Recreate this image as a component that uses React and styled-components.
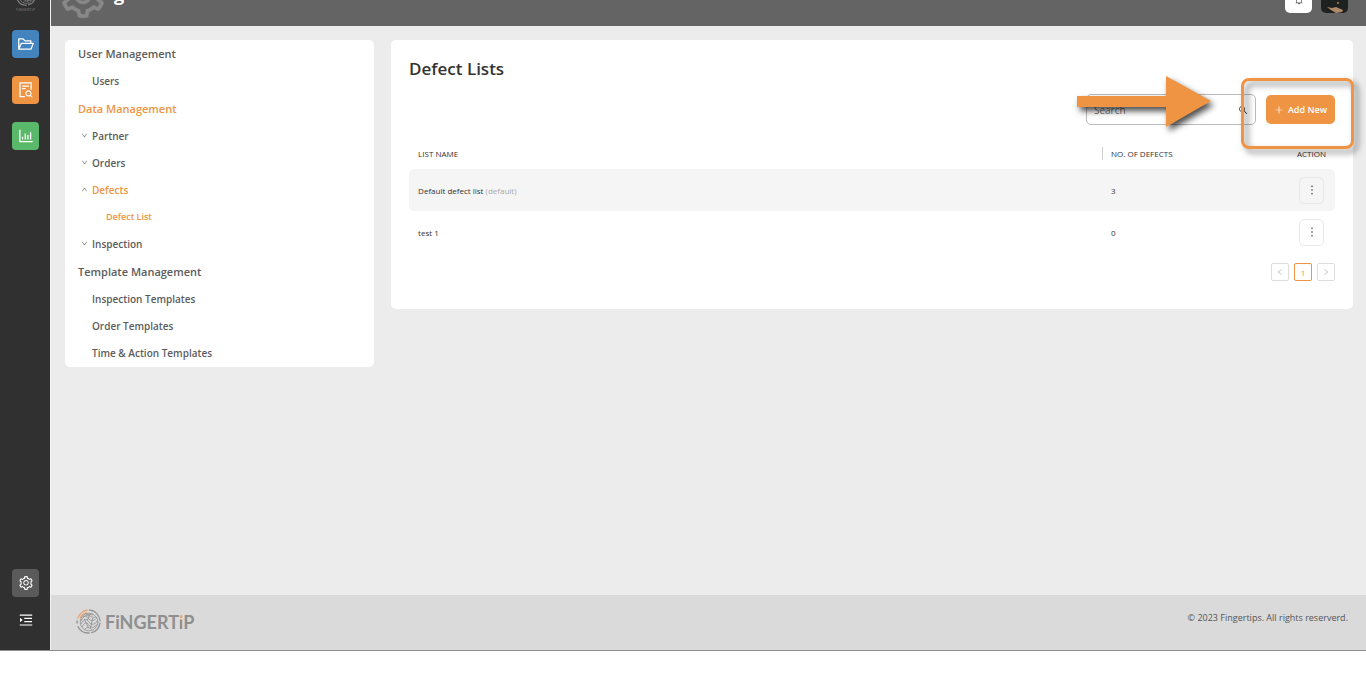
import React from 'react';
import styled, { createGlobalStyle } from 'styled-components';
import {
  AiOutlineFolderOpen,
  AiOutlineFileSearch,
  AiOutlineBarChart,
  AiOutlineSetting,
  AiOutlineMenuUnfold,
  AiOutlineBell,
  AiOutlinePlus,
  AiOutlineSearch,
  AiOutlineMore,
  AiOutlineDown,
  AiOutlineUp,
  AiOutlineLeft,
  AiOutlineRight,
} from 'react-icons/ai';

const menu = [
  { label: 'User Management', level: 0 },
  { label: 'Users', level: 1 },
  { label: 'Data Management', level: 0, active: true },
  { label: 'Partner', level: 1, arrow: 'down' },
  { label: 'Orders', level: 1, arrow: 'down' },
  { label: 'Defects', level: 1, arrow: 'up', active: true },
  { label: 'Defect List', level: 2, active: true },
  { label: 'Inspection', level: 1, arrow: 'down' },
  { label: 'Template Management', level: 0 },
  { label: 'Inspection Templates', level: 1 },
  { label: 'Order Templates', level: 1 },
  { label: 'Time & Action Templates', level: 1 },
];

const lists = [
  { name: 'Default defect list', note: '(default)', count: 3 },
  { name: 'test 1', count: 0 },
];

const FingerMark = ({ size, color, accent }) => (
  <svg width={size} height={size} viewBox='0 0 24 24' fill='none' stroke={color} strokeLinecap='round'>
    <path d='M13 1a11 11 0 0 1 10 10M23 13.5A11 11 0 0 1 15 22.6M12.5 23A11 11 0 0 1 2 17M1 13.5v-2' strokeWidth='1.3' />
    <path d='M1.6 9A11 11 0 0 1 5 4M6 3.2A11 11 0 0 1 10.5 1.2M4.3 8A9 9 0 0 1 10 3.8' stroke={accent} strokeWidth='1.3' />
    <circle cx='12.5' cy='12.5' r='8.5' strokeWidth='0.8' />
    <path d='M5 11c2-5 5-5 7-2s6 3 8-1M5 14c3-5 5-5 7-2s6 4 8 0M6 17c2-4 4-5 6-2s5 4 8 0M9 19.5c1-3 3-2 6 0M7 8c3-3 5-2 7-1s4 2 5 0M10 5.5c2-1 4 0 6 0M8 10l4 8M13 6l-2 5M16 9l-2 9' strokeWidth='0.9' />
  </svg>
);

const App = () => {
  return (
    <>
      <GlobalStyle />
      <Page>
        <Rail>
          <RailLogo>
            <FingerMark size={20} color='#858585' accent='#858585' />
            <span>FiNGERTiP</span>
          </RailLogo>
          <RailButton $color='#4384bf' aria-label='Files'><AiOutlineFolderOpen /></RailButton>
          <RailButton $color='#ee9443' aria-label='Inspections'><AiOutlineFileSearch /></RailButton>
          <RailButton $color='#5ab86a' aria-label='Reports'><AiOutlineBarChart /></RailButton>
          <RailFooter>
            <RailButton $color='#5a5a5a' aria-label='Settings'><AiOutlineSetting /></RailButton>
            <RailButton $color='transparent' aria-label='Expand menu'><AiOutlineMenuUnfold /></RailButton>
          </RailFooter>
        </Rail>
        <Main>
          <Header>
            <HeaderGear><AiOutlineSetting /></HeaderGear>
            <HeaderTitle>g</HeaderTitle>
            <HeaderTools>
              <BellButton aria-label='Notifications'><AiOutlineBell /></BellButton>
              <Avatar viewBox='0 0 27 27' aria-label='Profile'>
                <rect width='27' height='27' rx='5' fill='#1d211f' />
                <path d='M6 21l5 1 4-1 7 3-1 2-6 1-5-3z' fill='#b08a68' />
                <circle cx='17' cy='17' r='1' fill='#b5863c' />
              </Avatar>
            </HeaderTools>
          </Header>
          <Content>
            <SideMenu>
              {menu.map((item) => (
                <MenuItem key={item.label} href='#' $level={item.level} $active={item.active}>
                  {item.arrow && <Arrow>{item.arrow === 'up' ? <AiOutlineUp /> : <AiOutlineDown />}</Arrow>}
                  {item.label}
                </MenuItem>
              ))}
            </SideMenu>
            <Panel>
              <Title>Defect Lists</Title>
              <Toolbar>
                <SearchBox>
                  <input type='text' placeholder='Search' aria-label='Search' />
                  <AiOutlineSearch />
                </SearchBox>
                <AddButton><AiOutlinePlus />Add New</AddButton>
                <Highlight />
                <Pointer viewBox='0 0 150 64' aria-hidden='true'>
                  <path d='M1 20h89V0l45 25-45 26V31H1z' fill='#ee9443' />
                </Pointer>
              </Toolbar>
              <Table>
                <thead>
                  <tr>
                    <th>LIST NAME</th>
                    <CountHead>NO. OF DEFECTS</CountHead>
                    <ActionHead>ACTION</ActionHead>
                  </tr>
                </thead>
                <tbody>
                  {lists.map((list) => (
                    <tr key={list.name}>
                      <td>{list.name} {list.note && <Note>{list.note}</Note>}</td>
                      <td>{list.count}</td>
                      <td><MoreButton aria-label='Actions'><AiOutlineMore /></MoreButton></td>
                    </tr>
                  ))}
                </tbody>
              </Table>
              <Pagination>
                <PageButton aria-label='Previous'><AiOutlineLeft /></PageButton>
                <PageButton $active>1</PageButton>
                <PageButton aria-label='Next'><AiOutlineRight /></PageButton>
              </Pagination>
            </Panel>
          </Content>
          <Footer>
            <FooterLogo>
              <FingerMark size={25} color='#949494' accent='#e3a576' />
              <span>FiNGERT<AccentLetter>i</AccentLetter>P</span>
            </FooterLogo>
            <Copyright>© 2023 Fingertips. All rights reserverd.</Copyright>
          </Footer>
        </Main>
      </Page>
    </>
  )
};

const GlobalStyle = createGlobalStyle`
  * {
    box-sizing: border-box;
  }
  body {
    margin: 0;
    background: #fff;
    font-family: 'Open Sans', 'Noto Sans', sans-serif;
    color: #333;
  }
  button, input {
    font-family: inherit;
  }
`;

const Page = styled.div`
  display: flex;
  min-height: calc(100vh - 29px);
  border-bottom: 1px solid #8c8c8c;
  background: #ececec;
`;

const Rail = styled.nav`
  width: 51px;
  flex-shrink: 0;
  display: flex;
  flex-direction: column;
  align-items: center;
  gap: 18px;
  padding-bottom: 16px;
  background: #303030;
  box-shadow: inset -1px 0 #f4f4f4;
`;

const RailLogo = styled.div`
  height: 12px;
  display: flex;
  flex-direction: column;
  align-items: center;
  justify-content: flex-end;
  overflow: hidden;
  color: #777;
  font-size: 4px;
  line-height: 4px;
  svg {
    flex-shrink: 0;
    margin-bottom: 2px;
  }
`;

const RailButton = styled.button`
  width: 27px;
  height: 28px;
  display: flex;
  align-items: center;
  justify-content: center;
  padding: 0;
  border: 0;
  border-radius: 4px;
  background: ${(props) => props.$color};
  color: #fff;
  font-size: 18px;
`;

const RailFooter = styled.div`
  margin-top: auto;
  display: flex;
  flex-direction: column;
  gap: 9px;
  svg {
    font-size: 16px;
  }
`;

const Main = styled.div`
  flex: 1;
  min-width: 0;
  display: flex;
  flex-direction: column;
`;

const Header = styled.header`
  height: 26px;
  display: flex;
  align-items: flex-end;
  padding: 0 18px 0 7px;
  overflow: hidden;
  background: #646464;
  color: #fff;
`;

const HeaderGear = styled.span`
  display: flex;
  padding-bottom: 5px;
  color: #888;
  font-size: 50px;
  svg {
    stroke-width: 8;
  }
`;

const HeaderTitle = styled.h1`
  margin: 0 0 0 6px;
  padding-bottom: 20px;
  font-size: 18px;
  line-height: 24px;
  font-weight: 700;
`;

const HeaderTools = styled.div`
  margin-left: auto;
  display: flex;
  gap: 9px;
  padding-bottom: 13px;
`;

const BellButton = styled.button`
  width: 27px;
  height: 27px;
  display: flex;
  align-items: center;
  justify-content: center;
  padding: 0;
  border: 0;
  border-radius: 5px;
  background: #fff;
  color: #555;
  font-size: 10px;
`;

const Avatar = styled.svg`
  width: 27px;
  height: 27px;
`;

const Content = styled.div`
  flex: 1;
  display: flex;
  align-items: flex-start;
  gap: 17px;
  padding: 14px 13px 24px 14px;
`;

const SideMenu = styled.nav`
  width: 24%;
  flex-shrink: 0;
  padding-bottom: 1px;
  border-radius: 5px;
  background: #fff;
`;

const MenuItem = styled.a`
  display: flex;
  align-items: center;
  height: 27px;
  margin-top: ${(props) => (props.$level === 0 ? 1 : 0)}px;
  padding-left: ${(props) => 13 + props.$level * 14}px;
  color: ${(props) => (props.$active ? '#ee9443' : '#5c5c5c')};
  font-size: ${(props) => [11, 10, 9][props.$level]}px;
  font-weight: 600;
  text-decoration: none;
  &:first-child {
    margin-top: 0;
  }
`;

const Arrow = styled.span`
  width: 11px;
  margin-left: -11px;
  display: flex;
  color: #666;
  font-size: 7px;
`;

const Panel = styled.section`
  flex: 1;
  min-width: 0;
  padding: 17px 18px 28px;
  border-radius: 5px;
  background: #fff;
`;

const Title = styled.h2`
  margin: 0;
  font-size: 17px;
  line-height: 24px;
  font-weight: 600;
`;

const Toolbar = styled.div`
  position: relative;
  display: flex;
  align-items: center;
  justify-content: flex-end;
  gap: 10px;
  margin-top: 13px;
`;

const SearchBox = styled.label`
  width: 170px;
  height: 31px;
  display: flex;
  align-items: center;
  padding: 0 7px;
  border: 1px solid #bbb;
  border-radius: 5px;
  font-size: 10px;
  input {
    flex: 1;
    min-width: 0;
    padding: 0;
    border: 0;
    outline: 0;
    font-size: 10px;
  }
`;

const AddButton = styled.button`
  height: 29px;
  display: flex;
  align-items: center;
  gap: 4px;
  padding: 0 8px;
  border: 0;
  border-radius: 5px;
  background: #ee9443;
  color: #fff;
  font-size: 9px;
  font-weight: 600;
  svg {
    font-size: 10px;
  }
`;

const Highlight = styled.div`
  position: absolute;
  top: -16px;
  right: -19px;
  width: 113px;
  height: 71px;
  border: 3px solid #ee9443;
  border-radius: 8px;
  filter: drop-shadow(4px 4px 3px rgba(0, 0, 0, 0.5));
  pointer-events: none;
`;

const Pointer = styled.svg`
  position: absolute;
  top: -18px;
  right: 109px;
  width: 150px;
  height: 64px;
  filter: drop-shadow(3px 4px 3px rgba(0, 0, 0, 0.7));
  pointer-events: none;
`;

const Table = styled.table`
  width: 100%;
  margin-top: 12px;
  border-spacing: 0;
  table-layout: fixed;
  font-size: 8px;
  th {
    height: 32px;
    padding: 0 9px;
    font-weight: 400;
    text-align: left;
  }
  td {
    height: 42px;
    padding: 0 9px;
  }
  td:last-child {
    padding: 0 11px;
  }
  tbody tr:nth-child(odd) td {
    background: #f5f5f5;
  }
  td:first-child {
    border-radius: 5px 0 0 5px;
  }
  td:last-child {
    border-radius: 0 5px 5px 0;
  }
`;

const CountHead = styled.th`
  width: 168px;
  background: linear-gradient(#ccc, #ccc) left center / 1px 13px no-repeat;
`;

const ActionHead = styled.th`
  width: 65px;
  && {
    text-align: right;
  }
`;

const Note = styled.span`
  color: #aaa;
`;

const MoreButton = styled.button`
  width: 25px;
  height: 27px;
  display: flex;
  align-items: center;
  justify-content: center;
  margin-left: auto;
  padding: 0;
  border: 1px solid #e8e8e8;
  border-radius: 5px;
  background: transparent;
  color: #333;
  font-size: 14px;
`;

const Pagination = styled.div`
  display: flex;
  justify-content: flex-end;
  gap: 5px;
  margin-top: 10px;
`;

const PageButton = styled.button`
  width: 18px;
  height: 18px;
  display: flex;
  align-items: center;
  justify-content: center;
  padding: 0;
  border: 1px solid ${(props) => (props.$active ? '#ee9443' : '#ddd')};
  border-radius: 2px;
  background: #fff;
  color: ${(props) => (props.$active ? '#ee9443' : '#bbb')};
  font-size: 8px;
`;

const Footer = styled.footer`
  height: 55px;
  display: flex;
  align-items: center;
  justify-content: space-between;
  padding: 0 18px 2px 25px;
  background: #dadada;
`;

const FooterLogo = styled.div`
  display: flex;
  align-items: center;
  gap: 4px;
  color: #8f8f8f;
  font-family: Lato, sans-serif;
  font-size: 18px;
  font-weight: 700;
`;

const AccentLetter = styled.span`
  background: linear-gradient(#e3a576 40%, #8f8f8f 40%);
  background-clip: text;
  color: transparent;
`;

const Copyright = styled.span`
  padding-bottom: 8px;
  color: #555;
  font-size: 9px;
`;

export default App;
